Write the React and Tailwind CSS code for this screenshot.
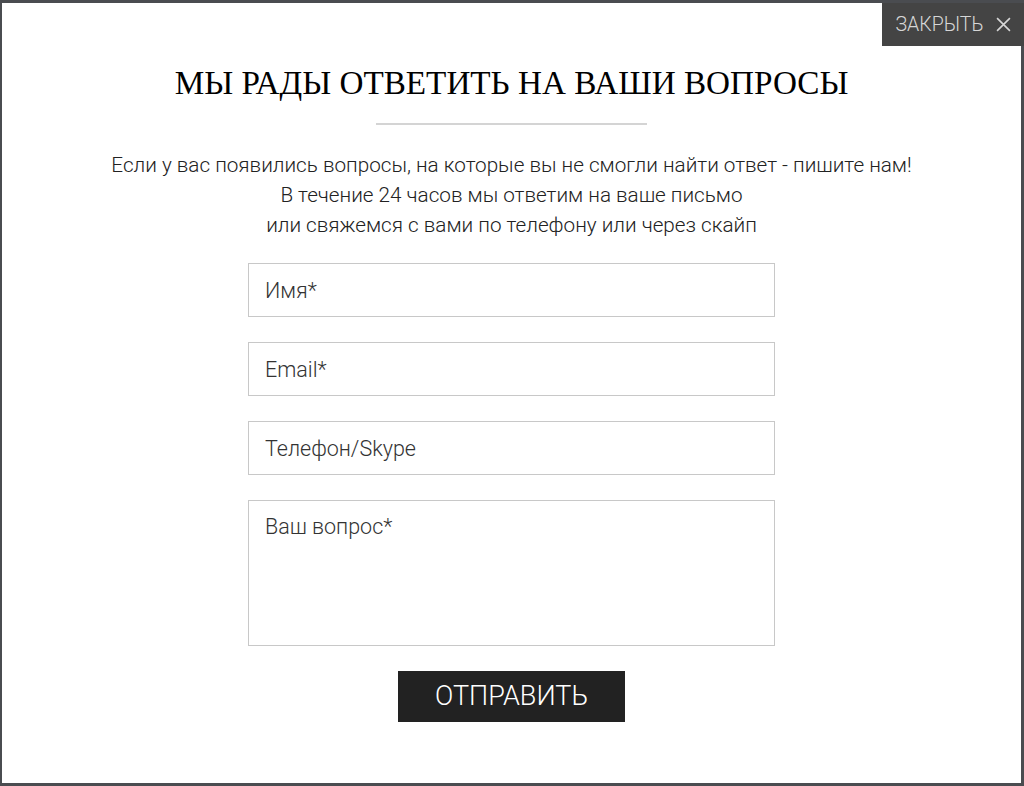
import React from 'react';

const Field = ({ placeholder }) => (
  <input
    type="text"
    placeholder={placeholder}
    className="w-full h-[54px] border border-[#c8c8c8] bg-white px-4 text-[21.5px] font-light text-[#333] placeholder:text-[#333] outline-none"
  />
);

const App = () => {
  return (
    <div className="h-[786px] w-[1024px] bg-[#4a4c50] pt-[3px] pl-[2px] pr-[3px] pb-[3px] font-['Roboto',sans-serif]">
      <div className="relative h-full bg-white">
        <button className="absolute top-0 right-[-3px] flex h-[43px] w-[142px] items-center justify-center gap-[12px] bg-[#444] text-[19.5px] font-light text-[#d6d6d6]">
          <span>ЗАКРЫТЬ</span>
          <svg width="15" height="15" viewBox="0 0 14 14" stroke="currentColor" strokeWidth="1.5">
            <path d="M1 1 L13 13 M13 1 L1 13" />
          </svg>
        </button>

        <div className="flex flex-col items-center pt-[60px]">
          <h1 className="font-['Liberation_Serif',serif] text-[33.2px] leading-[40px] text-black">
            МЫ РАДЫ ОТВЕТИТЬ НА ВАШИ ВОПРОСЫ
          </h1>
          <div className="mt-[20px] h-[2px] w-[271px] bg-[#d4d4d4]" />
          <p className="mt-[25px] text-center text-[20.7px] font-light leading-[30px] text-[#222]">
            Если у вас появились вопросы, на которые вы не смогли найти ответ - пишите нам!
            <br />
            В течение 24 часов мы ответим на ваше письмо
            <br />
            или свяжемся с вами по телефону или через скайп
          </p>

          <form className="mt-[23px] flex w-[527px] flex-col gap-[25px]">
            <Field placeholder="Имя*" />
            <Field placeholder="Email*" />
            <Field placeholder="Телефон/Skype" />
            <textarea
              placeholder="Ваш вопрос*"
              className="h-[146px] w-full resize-none border border-[#c8c8c8] bg-white px-4 pt-[10px] text-[21.5px] font-light text-[#333] placeholder:text-[#333] outline-none"
            />
            <button
              type="button"
              className="mx-auto h-[51px] w-[227px] bg-[#222] text-[27px] font-light text-white"
            >
              ОТПРАВИТЬ
            </button>
          </form>
        </div>
      </div>
    </div>
  );
};

export default App;
